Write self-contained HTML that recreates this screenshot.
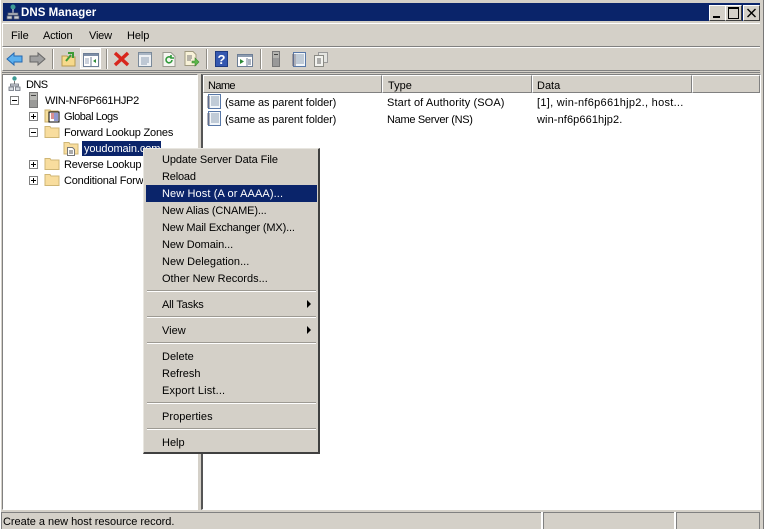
<!DOCTYPE html>
<html><head><meta charset="utf-8"><style>
html,body{margin:0;padding:0;width:764px;height:529px;overflow:hidden;background:#d4d0c8}
body{position:relative;font-family:"Liberation Sans","DejaVu Sans",sans-serif;font-size:11px;color:#000}
.a{position:absolute}
.t{position:absolute;white-space:nowrap;line-height:14px;height:14px;margin-top:1px}
svg{position:absolute;overflow:visible}
.sep{position:absolute;left:147px;width:169px;height:1px;background:#9d9a93;border-bottom:1px solid #fff}
.pm{position:absolute;width:7px;height:7px;border:1px solid #808080;background:#fff;box-sizing:content-box}
.pm:before{content:"";position:absolute;left:1px;top:3px;width:5px;height:1px;background:#000}
.pl:after{content:"";position:absolute;left:3px;top:1px;width:1px;height:5px;background:#000}
.w{position:absolute;top:5px;width:15px;height:14px;background:#d4d0c8;border-top:1px solid #fff;border-left:1px solid #fff;border-right:1px solid #404040;border-bottom:1px solid #404040}
.hd{position:absolute;top:75px;height:18px;background:#d4d0c8;border-right:1px solid #808080;border-bottom:1px solid #808080;border-left:1px solid #fff;border-top:1px solid #fff;box-sizing:border-box}
.tb{position:absolute;top:49px;width:2px;height:20px;border-left:1px solid #8f8c85;border-right:1px solid #fff;box-sizing:border-box}
</style></head><body>
<div class="a" style="left:0;top:0;width:1px;height:529px;background:#fff"></div>
<div class="a" style="left:763px;top:0;width:1px;height:529px;background:#777"></div>
<div class="a" style="left:3px;top:3px;width:757px;height:18px;background:#0a246a"></div>
<svg style="left:5px;top:4px" width="16" height="16" viewBox="0 0 16 16"><circle cx="8" cy="3" r="2.5" fill="#3f9a94"/><path d="M8 5v4" stroke="#eee" stroke-width="1"/><path d="M3 9h10v2H3zM2 12h5v3H2zM9 12h5v3H9z" fill="#c9cdd4" stroke="#5a6070" stroke-width=".7"/></svg>
<div class="t" style="left:21px;top:5px;color:#fff;font-weight:bold;font-size:11.5px;letter-spacing:.05px">DNS Manager</div>
<div class="w" style="left:709px"><div class="a" style="left:3px;top:10px;width:7px;height:2px;background:#000"></div></div>
<div class="w" style="left:725px"><div class="a" style="left:2px;top:1px;width:9px;height:9px;border:1px solid #000;border-top-width:2px"></div></div>
<div class="w" style="left:743px"><svg style="left:3px;top:2px" width="10" height="10"><path d="M0.5 1L8.500 9M8.500 1L0.5 9" stroke="#000" stroke-width="1.400"/></svg></div>

<div class="a" style="left:2px;top:23px;width:757px;height:22px;border-top:1px solid #fff;border-left:1px solid #fff;border-bottom:1px solid #808080;box-sizing:content-box"></div>
<div class="a" style="left:2px;top:47px;width:757px;height:22px;border-top:1px solid #fff;border-left:1px solid #fff;border-bottom:1px solid #808080"></div>
<div class="a" style="left:2px;top:72px;width:758px;height:1px;background:#808080"></div>
<div class="t" style="left:11px;top:28px">File</div>
<div class="t" style="left:43px;top:28px;letter-spacing:-.2px">Action</div>
<div class="t" style="left:89px;top:28px;letter-spacing:-.2px">View</div>
<div class="t" style="left:127px;top:28px;letter-spacing:-.1px">Help</div>

<svg style="left:6px;top:51px" width="17" height="16" viewBox="0 0 17 16"><path d="M1 8L8 2v3h8v6H8v3z" fill="#5cb0ee" stroke="#2468b0"/></svg>
<svg style="left:29px;top:51px" width="17" height="16" viewBox="0 0 17 16"><path d="M16 8L9 2v3H1v6h8v3z" fill="#a0a0a0" stroke="#666"/></svg>
<div class="tb" style="left:52px"></div>
<svg style="left:61px;top:51px" width="16" height="16" viewBox="0 0 16 16"><path d="M1 5h5l1 1h7v9H1z" fill="#f6d98b" stroke="#b89a50"/><path d="M5 10L10 4M7 2h5v5" stroke="#3d9b35" stroke-width="2" fill="none"/></svg>
<div class="a" style="left:80px;top:48px;width:21px;height:21px;background:#f1f0ec;border:1px solid #fff;box-sizing:border-box"></div>
<svg style="left:83px;top:53px" width="16" height="14" viewBox="0 0 16 14"><rect x=".5" y=".5" width="15" height="13" fill="#fff" stroke="#6d7e96"/><rect x="1" y="1" width="14" height="2" fill="#7d8ea6"/><path d="M8 4v9" stroke="#6d7e96"/><path d="M13 6l-3 2 3 2z" fill="#2d8a36"/><path d="M2 6h4M2 8h4M2 10h4" stroke="#9aa6b8"/></svg>
<div class="tb" style="left:106px"></div>
<svg style="left:113px;top:51px" width="17" height="16" viewBox="0 0 17 16"><path d="M2 2L15 14M15 2L2 14" stroke="#d8261c" stroke-width="3.400"/></svg>
<svg style="left:138px;top:52px" width="14" height="15" viewBox="0 0 14 15"><rect x=".5" y=".5" width="13" height="14" fill="#eef1f4" stroke="#7a8a9a"/><rect x="1" y="1" width="12" height="2" fill="#aab6c4"/><path d="M3 6h8M3 8h8M3 10h8M3 12h6" stroke="#8da0b4"/></svg>
<svg style="left:162px;top:52px" width="14" height="15" viewBox="0 0 14 15"><path d="M1 .5h8l4 4v10H1z" fill="#f6f6f2" stroke="#9a9a90"/><path d="M10 8a3 3 0 1 1-1-2.400M9 3v3h3" stroke="#2f9a3a" stroke-width="1.600" fill="none"/></svg>
<svg style="left:184px;top:51px" width="16" height="16" viewBox="0 0 16 16"><path d="M1 .5h8l3 3v11H1z" fill="#f8f2d8" stroke="#a09a80"/><path d="M3 5h5M3 7h5M3 9h4" stroke="#777"/><path d="M8 10h3V7l4 4-4 4v-3H8z" fill="#5cb84a" stroke="#3c8a30" stroke-width=".6"/></svg>
<div class="tb" style="left:206px"></div>
<div class="a" style="left:215px;top:51px;width:13px;height:16px;background:#3558b0;border:1px solid #1e3a80;box-sizing:border-box;color:#fff;font-weight:bold;font-size:13px;line-height:15px;text-align:center">?</div>
<svg style="left:237px;top:54px" width="16" height="13" viewBox="0 0 16 13"><rect x=".5" y=".5" width="15" height="12" fill="#fff" stroke="#6d7e96"/><rect x="1" y="1" width="14" height="2" fill="#8d9cb0"/><path d="M10 4v8" stroke="#6d7e96"/><path d="M3 5l4 2.500-4 2.500z" fill="#2d8a36"/><path d="M11 6h3M11 8h3M11 10h3" stroke="#5a6a80"/></svg>
<div class="tb" style="left:260px"></div>
<svg style="left:272px;top:51px" width="8" height="16" viewBox="0 0 8 16"><rect x=".5" y=".5" width="7" height="15" fill="#b4b4b0" stroke="#777"/><rect x="2" y="3" width="4" height="1" fill="#444"/><rect x="1" y="7" width="6" height="8" fill="#999"/></svg>
<svg style="left:292px;top:52px" width="14" height="15" viewBox="0 0 14 15"><rect x="1.500" y=".5" width="12" height="14" fill="#f2f6fa" stroke="#5878a8"/><path d="M0 3h4M0 5h4M0 7h4M0 9h4M0 11h4M0 13h4" stroke="#667"/><path d="M4 3h8M4 5h8M4 7h8M4 9h8M4 11h8" stroke="#8da0b4"/></svg>
<svg style="left:314px;top:52px" width="14" height="15" viewBox="0 0 14 15"><rect x="4.500" y=".5" width="9" height="10" fill="#e4e4e0" stroke="#999"/><path d="M.5 3.500h9v11h-9z" fill="#f2f2ee" stroke="#8a8a84"/><path d="M3 7h4M3 9h4M3 11h4" stroke="#666"/></svg>

<!-- tree pane -->
<div class="a" style="left:2px;top:74px;width:196px;height:436px;background:#fff;border-top:1px solid #808080;border-left:1px solid #808080;border-right:1px solid #fff;border-bottom:1px solid #fff;box-sizing:border-box"></div>
<svg style="left:8px;top:76px" width="13" height="16" viewBox="0 0 13 16"><circle cx="6.500" cy="2.500" r="2.200" fill="#3f9a94"/><path d="M6.500 5v3" stroke="#777"/><path d="M2.500 8h8v2h-8zM1 11h4.500v3.500H1zM7.500 11H12v3.500H7.500z" fill="#d6dae0" stroke="#666c78" stroke-width=".8"/></svg>
<div class="t" style="left:26px;top:77px;letter-spacing:-.6px">DNS</div>
<div class="pm" style="left:10px;top:96px"></div>
<svg style="left:29px;top:92px" width="9" height="16" viewBox="0 0 9 16"><rect x=".5" y=".5" width="8" height="15" fill="#b8b8b4" stroke="#777"/><rect x="2" y="3" width="5" height="1" fill="#444"/><rect x="1" y="8" width="7" height="7" fill="#9a9a98"/></svg>
<div class="t" style="left:45px;top:93px;letter-spacing:-.3px">WIN-NF6P661HJP2</div>
<div class="pm pl" style="left:29px;top:112px"></div>
<svg style="left:44px;top:108px" width="16" height="15" viewBox="0 0 16 15"><path d="M1 2h5l1 1h7v11H1z" fill="#f6de9c" stroke="#c8ae68"/><rect x="5" y="4" width="10" height="10" fill="#fff" stroke="#000"/><path d="M7 6h3M7 8h3M7 10h3" stroke="#b02020"/><path d="M11 5v8M13 5v8" stroke="#2030a0"/></svg>
<div class="t" style="left:64px;top:109px;letter-spacing:-.45px">Global Logs</div>
<div class="pm" style="left:29px;top:128px"></div>
<svg style="left:44px;top:124px" width="16" height="14" viewBox="0 0 16 14"><path d="M1 2.500h5l1 1.500h8v9.500H1z" fill="#f8dd9e" stroke="#cfb675"/></svg>
<div class="t" style="left:64px;top:125px;letter-spacing:-.2px">Forward Lookup Zones</div>
<svg style="left:63px;top:140px" width="16" height="16" viewBox="0 0 16 16"><path d="M1 2.500h5l1 1.500h8v10H1z" fill="#f8dd9e" stroke="#cfb675"/><path d="M4.500 7.500h5l2 2v6h-7z" fill="#fff" stroke="#777"/><path d="M6 11h4M6 13h4" stroke="#555"/></svg>
<div class="a" style="left:82px;top:141px;width:79px;height:15px;background:#0a246a"></div>
<div class="t" style="left:84px;top:141px;color:#fff;letter-spacing:-.1px">youdomain.com</div>
<div class="pm pl" style="left:29px;top:160px"></div>
<svg style="left:44px;top:156px" width="16" height="14" viewBox="0 0 16 14"><path d="M1 2.500h5l1 1.500h8v9.500H1z" fill="#f8dd9e" stroke="#cfb675"/></svg>
<div class="t" style="left:64px;top:157px;letter-spacing:-.2px">Reverse Lookup Zones</div>
<div class="pm pl" style="left:29px;top:176px"></div>
<svg style="left:44px;top:172px" width="16" height="14" viewBox="0 0 16 14"><path d="M1 2.500h5l1 1.500h8v9.500H1z" fill="#f8dd9e" stroke="#cfb675"/></svg>
<div class="t" style="left:64px;top:173px;letter-spacing:-.2px">Conditional Forwarders</div>

<!-- list pane -->
<div class="a" style="left:201px;top:74px;width:560px;height:436px;background:#fff;border-top:1px solid #808080;border-left:2px solid #555;border-right:1px solid #fff;border-bottom:1px solid #fff;box-sizing:border-box"></div>
<div class="hd" style="left:203px;width:179px"></div>
<div class="hd" style="left:382px;width:150px"></div>
<div class="hd" style="left:532px;width:160px"></div>
<div class="hd" style="left:692px;width:68px"></div>
<div class="t" style="left:208px;top:78px;letter-spacing:-.6px">Name</div>
<div class="t" style="left:388px;top:78px">Type</div>
<div class="t" style="left:537px;top:78px">Data</div>
<svg style="left:207px;top:94px" width="15" height="15" viewBox="0 0 15 15"><rect x="1.500" y=".5" width="12" height="14" fill="#f2f6fa" stroke="#5878a8"/><path d="M0 3h3M0 5h3M0 7h3M0 9h3M0 11h3M0 13h3" stroke="#667"/><path d="M4 3h8M4 5h8M4 7h8M4 9h8M4 11h8" stroke="#8da0b4"/></svg>
<svg style="left:207px;top:111px" width="15" height="15" viewBox="0 0 15 15"><rect x="1.500" y=".5" width="12" height="14" fill="#f2f6fa" stroke="#5878a8"/><path d="M0 3h3M0 5h3M0 7h3M0 9h3M0 11h3M0 13h3" stroke="#667"/><path d="M4 3h8M4 5h8M4 7h8M4 9h8M4 11h8" stroke="#8da0b4"/></svg>
<div class="t" style="left:225px;top:95px;letter-spacing:-.11px">(same as parent folder)</div>
<div class="t" style="left:387px;top:95px;letter-spacing:.11px">Start of Authority (SOA)</div>
<div class="t" style="left:537px;top:95px;letter-spacing:.28px">[1], win-nf6p661hjp2., host...</div>
<div class="t" style="left:225px;top:112px;letter-spacing:-.11px">(same as parent folder)</div>
<div class="t" style="left:387px;top:112px;letter-spacing:-.3px">Name Server (NS)</div>
<div class="t" style="left:537px;top:112px;letter-spacing:.1px">win-nf6p661hjp2.</div>

<!-- context menu -->
<div class="a" style="left:143px;top:148px;width:177px;height:306px;background:#d4d0c8;border-top:1px solid #e8e6e0;border-left:1px solid #e8e6e0;border-right:2px solid #404040;border-bottom:2px solid #404040;box-sizing:border-box"></div>
<div class="a" style="left:146px;top:185px;width:171px;height:17px;background:#0a246a"></div>
<div class="t" style="left:162px;top:152px;letter-spacing:-.09px">Update Server Data File</div>
<div class="t" style="left:162px;top:169px;letter-spacing:-.18px">Reload</div>
<div class="t" style="left:162px;top:186px;color:#fff;letter-spacing:.11px">New Host (A or AAAA)...</div>
<div class="t" style="left:162px;top:203px;letter-spacing:-.15px">New Alias (CNAME)...</div>
<div class="t" style="left:162px;top:220px;letter-spacing:-.16px">New Mail Exchanger (MX)...</div>
<div class="t" style="left:162px;top:237px;letter-spacing:-.08px">New Domain...</div>
<div class="t" style="left:162px;top:254px;letter-spacing:.03px">New Delegation...</div>
<div class="t" style="left:162px;top:271px">Other New Records...</div>
<div class="sep" style="top:290px"></div>
<div class="t" style="left:162px;top:297px;letter-spacing:-.18px">All Tasks</div>
<svg style="left:307px;top:300px" width="5" height="8"><path d="M0 0l4 4-4 4z" fill="#000"/></svg>
<div class="sep" style="top:316px"></div>
<div class="t" style="left:162px;top:323px">View</div>
<svg style="left:307px;top:326px" width="5" height="8"><path d="M0 0l4 4-4 4z" fill="#000"/></svg>
<div class="sep" style="top:342px"></div>
<div class="t" style="left:162px;top:349px">Delete</div>
<div class="t" style="left:162px;top:366px">Refresh</div>
<div class="t" style="left:162px;top:383px;letter-spacing:.15px">Export List...</div>
<div class="sep" style="top:402px"></div>
<div class="t" style="left:162px;top:409px;letter-spacing:.05px">Properties</div>
<div class="sep" style="top:428px"></div>
<div class="t" style="left:162px;top:435px">Help</div>

<!-- status bar -->
<div class="a" style="left:1px;top:512px;width:540px;height:17px;border-top:1px solid #808080;border-left:1px solid #808080;box-sizing:border-box"></div>
<div class="a" style="left:541px;top:512px;width:2px;height:17px;background:#fff"></div>
<div class="a" style="left:543px;top:512px;width:131px;height:17px;border-top:1px solid #808080;border-left:1px solid #808080;box-sizing:border-box"></div>
<div class="a" style="left:674px;top:512px;width:2px;height:17px;background:#fff"></div>
<div class="a" style="left:676px;top:512px;width:84px;height:17px;border-top:1px solid #808080;border-left:1px solid #808080;border-right:1px solid #808080;box-sizing:border-box"></div>
<div class="t" style="left:3px;top:514px;letter-spacing:-.03px">Create a new host resource record.</div>
</body></html>
